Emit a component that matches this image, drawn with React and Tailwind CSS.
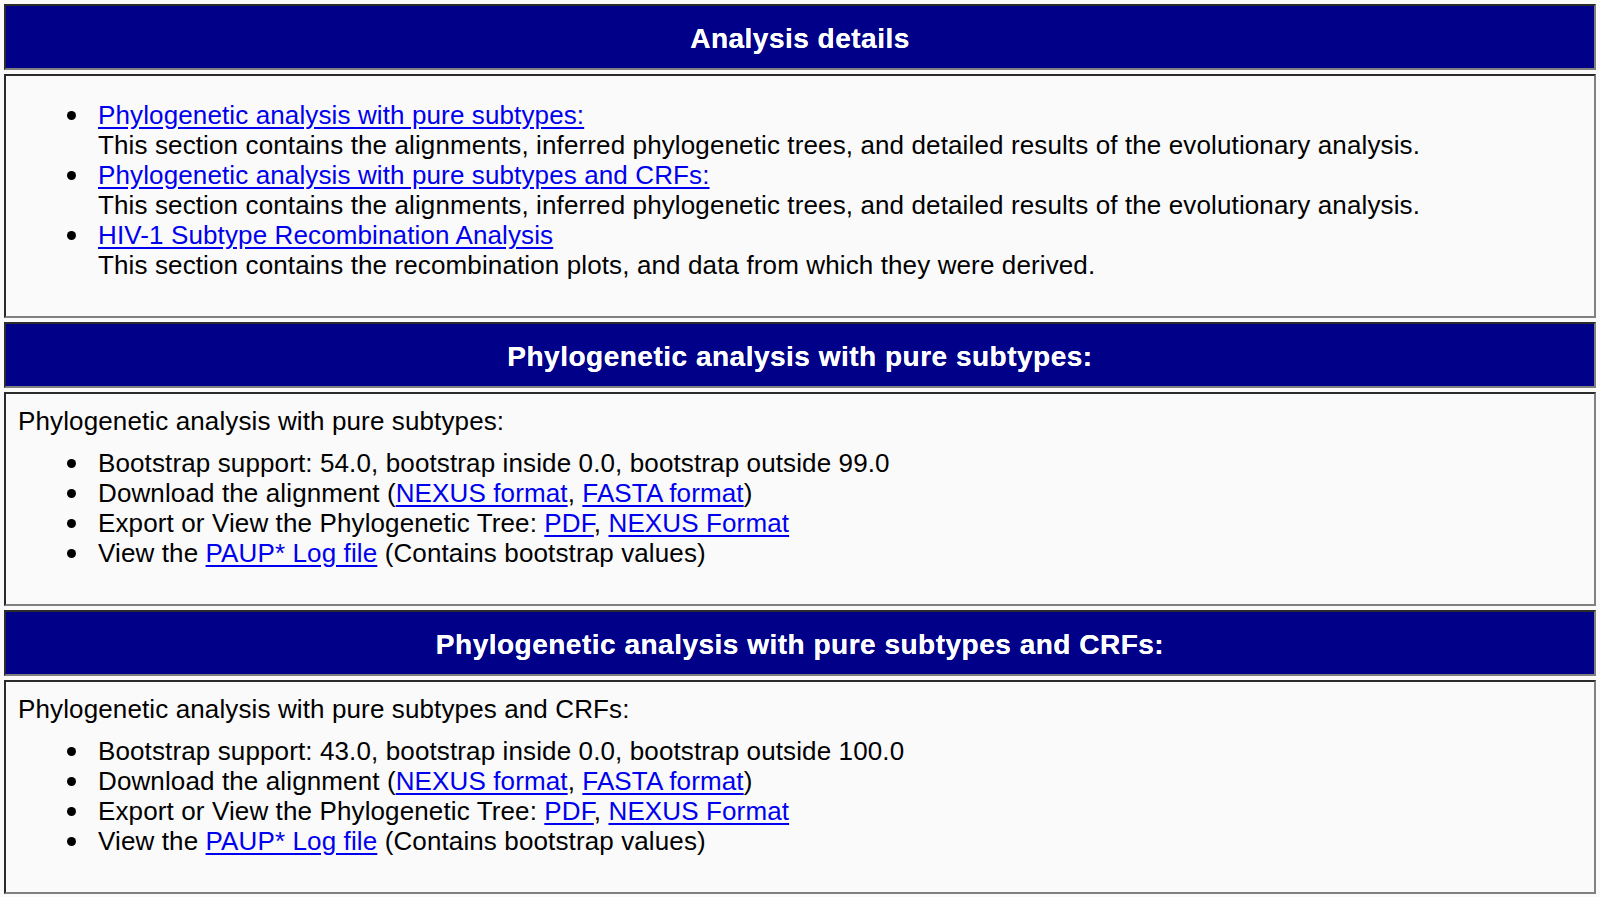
import React from 'react';

const sections = [
  {
    title: 'Phylogenetic analysis with pure subtypes:',
    bootstrap: 'Bootstrap support: 54.0, bootstrap inside 0.0, bootstrap outside 99.0',
  },
  {
    title: 'Phylogenetic analysis with pure subtypes and CRFs:',
    bootstrap: 'Bootstrap support: 43.0, bootstrap inside 0.0, bootstrap outside 100.0',
  },
];

const details = [
  {
    link: 'Phylogenetic analysis with pure subtypes:',
    text: 'This section contains the alignments, inferred phylogenetic trees, and detailed results of the evolutionary analysis.',
  },
  {
    link: 'Phylogenetic analysis with pure subtypes and CRFs:',
    text: 'This section contains the alignments, inferred phylogenetic trees, and detailed results of the evolutionary analysis.',
  },
  {
    link: 'HIV-1 Subtype Recombination Analysis',
    text: 'This section contains the recombination plots, and data from which they were derived.',
  },
];

function Link({ children }) {
  return <a href="#" className="text-[#0000ee] underline underline-offset-[3px]">{children}</a>;
}

function Header({ children }) {
  return (
    <div className="h-[66px] pt-[3px] flex items-center justify-center bg-[#000088] border-2 border-t-[#2b2b2b] border-l-[#2b2b2b] border-b-[#808080] border-r-[#808080]">
      <h2 className="text-white font-bold text-[28px] tracking-[0.5px] leading-none [text-shadow:0_0_0.5px_#fff]">{children}</h2>
    </div>
  );
}

function Item({ children }) {
  return (
    <li className="flex">
      <span className="w-[80px] h-[30px] shrink-0 flex items-center">
        <span className="ml-[49px] w-[9px] h-[9px] rounded-full bg-black" />
      </span>
      <div>{children}</div>
    </li>
  );
}

function Cell({ children, className = '' }) {
  return (
    <div className={`bg-[#fafafa] px-[12px] border-2 border-t-[#2b2b2b] border-l-[#2b2b2b] border-b-[#808080] border-r-[#808080] ${className}`}>
      {children}
    </div>
  );
}

export default function App() {
  return (
    <div
      className="min-h-[897px] bg-[#fafafa] p-[4px] flex flex-col gap-[4px] text-black text-[26px] leading-[30px] tracking-[0.12px]"
      style={{ fontFamily: '"Liberation Sans", Arial, Helvetica, sans-serif' }}
    >
      <Header>Analysis details</Header>
      <Cell className="pt-[24px] pb-[36px]">
        <ul>
          {details.map((d, i) => (
            <Item key={i}>
              <Link>{d.link}</Link>
              <div>{d.text}</div>
            </Item>
          ))}
        </ul>
      </Cell>

      {sections.map((s, i) => (
        <React.Fragment key={i}>
          <Header>{s.title}</Header>
          <Cell className="pt-[12px] pb-[36px]">
            <p>{s.title}</p>
            <ul className="mt-[12px]">
              <Item>{s.bootstrap}</Item>
              <Item>
                Download the alignment (<Link>NEXUS format</Link>, <Link>FASTA format</Link>)
              </Item>
              <Item>
                Export or View the Phylogenetic Tree: <Link>PDF</Link>, <Link>NEXUS Format</Link>
              </Item>
              <Item>
                View the <Link>PAUP* Log file</Link> (Contains bootstrap values)
              </Item>
            </ul>
          </Cell>
        </React.Fragment>
      ))}
    </div>
  );
}
